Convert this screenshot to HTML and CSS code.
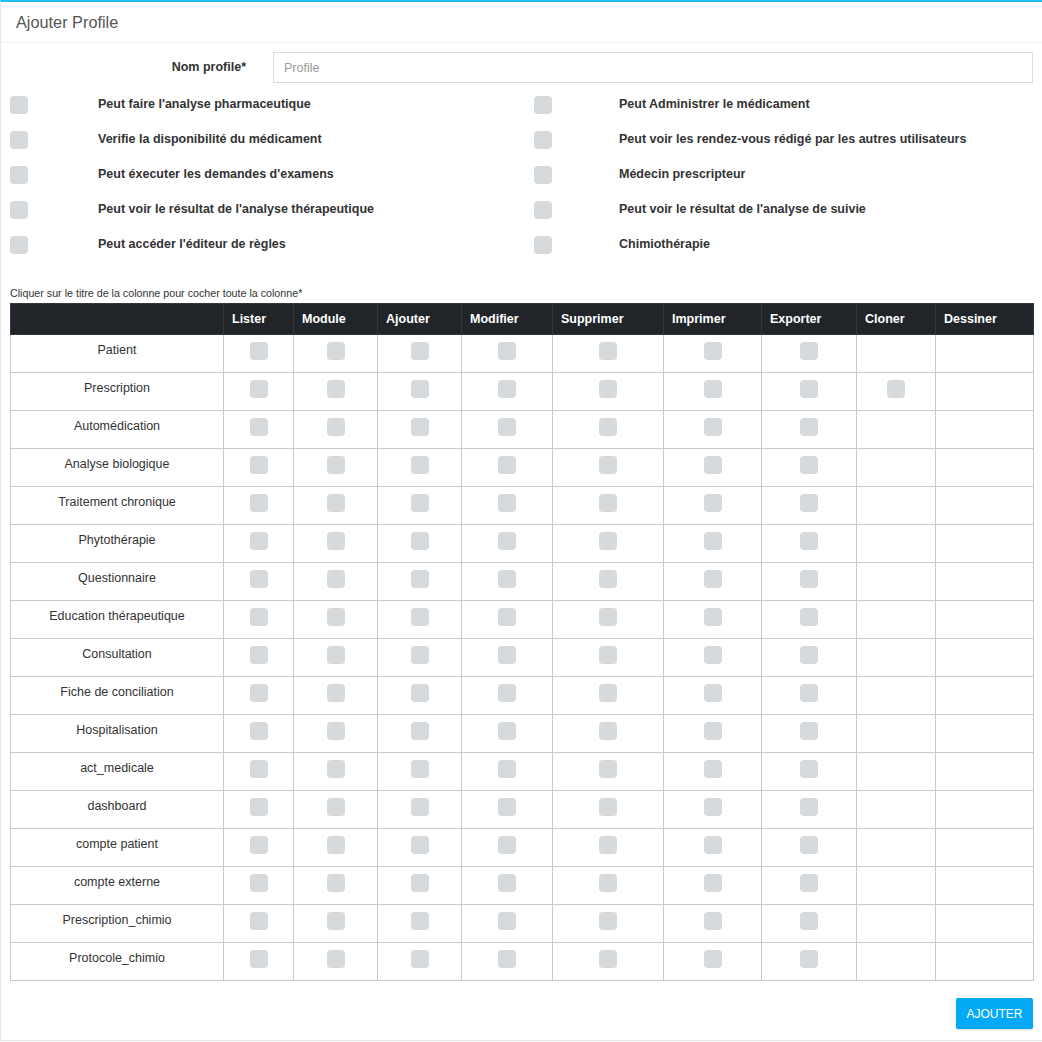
FILE: index.html
```html
<!DOCTYPE html>
<html lang="fr">
<head>
<meta charset="utf-8">
<title>Ajouter Profile</title>
<link rel="stylesheet" href="styles.css">
</head>
<body>
<div class="card">
  <div class="card-header">Ajouter Profile</div>
  <div class="card-body">
    <div class="name-row">
      <label class="name-label">Nom profile*</label>
      <input class="name-input" type="text" placeholder="Profile">
    </div>
    <div class="perm-grid">
      <span class="cb"></span><span class="perm-label">Peut faire l'analyse pharmaceutique</span>
      <span class="cb"></span><span class="perm-label">Peut Administrer le médicament</span>
      <span class="cb"></span><span class="perm-label">Verifie la disponibilité du médicament</span>
      <span class="cb"></span><span class="perm-label">Peut voir les rendez-vous rédigé par les autres utilisateurs</span>
      <span class="cb"></span><span class="perm-label">Peut éxecuter les demandes d'examens</span>
      <span class="cb"></span><span class="perm-label">Médecin prescripteur</span>
      <span class="cb"></span><span class="perm-label">Peut voir le résultat de l'analyse thérapeutique</span>
      <span class="cb"></span><span class="perm-label">Peut voir le résultat de l'analyse de suivie</span>
      <span class="cb"></span><span class="perm-label">Peut accéder l'éditeur de règles</span>
      <span class="cb"></span><span class="perm-label">Chimiothérapie</span>
    </div>
    <p class="note">Cliquer sur le titre de la colonne pour cocher toute la colonne*</p>
    <table class="rights">
      <colgroup>
        <col style="width:213px"><col style="width:70px"><col style="width:84px"><col style="width:84px"><col style="width:91px"><col style="width:111px"><col style="width:98px"><col style="width:95px"><col style="width:79px"><col style="width:98px">
      </colgroup>
      <thead>
        <tr><th></th><th>Lister</th><th>Module</th><th>Ajouter</th><th>Modifier</th><th>Supprimer</th><th>Imprimer</th><th>Exporter</th><th>Cloner</th><th>Dessiner</th></tr>
      </thead>
      <tbody id="rows"></tbody>
    </table>
    <div class="actions"><button class="btn">AJOUTER</button></div>
  </div>
</div>
<script src="app.js"></script>
</body>
</html>
```
FILE: app.js
```js
var names = ["Patient","Prescription","Automédication","Analyse biologique","Traitement chronique","Phytothérapie","Questionnaire","Education thérapeutique","Consultation","Fiche de conciliation","Hospitalisation","act_medicale","dashboard","compte patient","compte externe","Prescription_chimio","Protocole_chimio"];
var body = document.getElementById("rows");
names.forEach(function (n) {
  var tr = document.createElement("tr");
  var html = '<td class="name">' + n + '</td>';
  for (var i = 0; i < 7; i++) html += '<td class="c"><span class="cb"></span></td>';
  html += '<td class="c">' + (n === "Prescription" ? '<span class="cb"></span>' : '') + '</td>';
  html += '<td class="c"></td>';
  tr.innerHTML = html;
  body.appendChild(tr);
});
```
FILE: styles.css
```css
* { box-sizing: border-box; }
html, body { margin: 0; padding: 0; background: #fff; }
body { font-family: "Liberation Sans", Arial, sans-serif; color: #333; }

.card {
  width: 1042px;
  height: 1041px;
  border-top: 2px solid #1fbff0;
  border-left: 1px solid #e6e9ee;
  border-bottom: 1px solid #e3e6ea;
  background: #fff;
}
.card-header {
  height: 41px;
  padding: 11px 15px 0;
  font-size: 16.3px;
  color: #555;
  border-bottom: 1px solid #eef0f3;
}
.card-body { padding: 9px 9px 0 9px; }

.name-row { display: flex; align-items: flex-start; height: 32px; }
.name-label {
  width: 236px;
  text-align: right;
  font-weight: bold;
  font-size: 12.5px;
  padding-top: 8px;
}
.name-input {
  margin-left: 27px;
  flex: 1;
  height: 31px;
  border: 1px solid #d8dce3;
  padding: 0 10px;
  font-family: inherit;
  font-size: 12.5px;
  color: #333;
  outline: none;
}
.name-input::placeholder { color: #9a9a9a; }

.perm-grid {
  margin-top: 12px;
  display: grid;
  grid-template-columns: 88px 436px 85px 1fr;
  grid-auto-rows: 35px;
  align-items: start;
}
.perm-label { font-size: 12.5px; font-weight: bold; line-height: 16px; }

.cb {
  display: inline-block;
  width: 18px;
  height: 18px;
  border-radius: 4px;
  background: #d6dadd;
  vertical-align: top;
}

.note { margin: 16px 0 0; font-size: 10.7px; line-height: 12px; color: #333; }

.rights {
  margin-top: 4px;
  width: 1024px;
  table-layout: fixed;
  border-collapse: collapse;
  font-size: 12.5px;
}
.rights th {
  background: #212529;
  color: #fff;
  font-weight: bold;
  text-align: left;
  padding: 7px 8px 7px;
  line-height: 16px;
  border: 1px solid #32383e;
}
.rights td {
  border: 1px solid #cacaca;
  height: 38px;
  padding: 7px 8px 0;
  vertical-align: top;
  line-height: 16px;
}
.rights td.name { text-align: center; color: #333; }
.rights td.c { text-align: center; }

.actions { display: flex; justify-content: flex-end; margin-top: 17px; }
.btn {
  width: 77px;
  height: 31px;
  background: #03a9f4;
  color: #fff;
  border: none;
  border-radius: 2px;
  font-family: inherit;
  font-size: 12px;
  box-shadow: 0 1px 2px rgba(0,0,0,0.15);
}
```
